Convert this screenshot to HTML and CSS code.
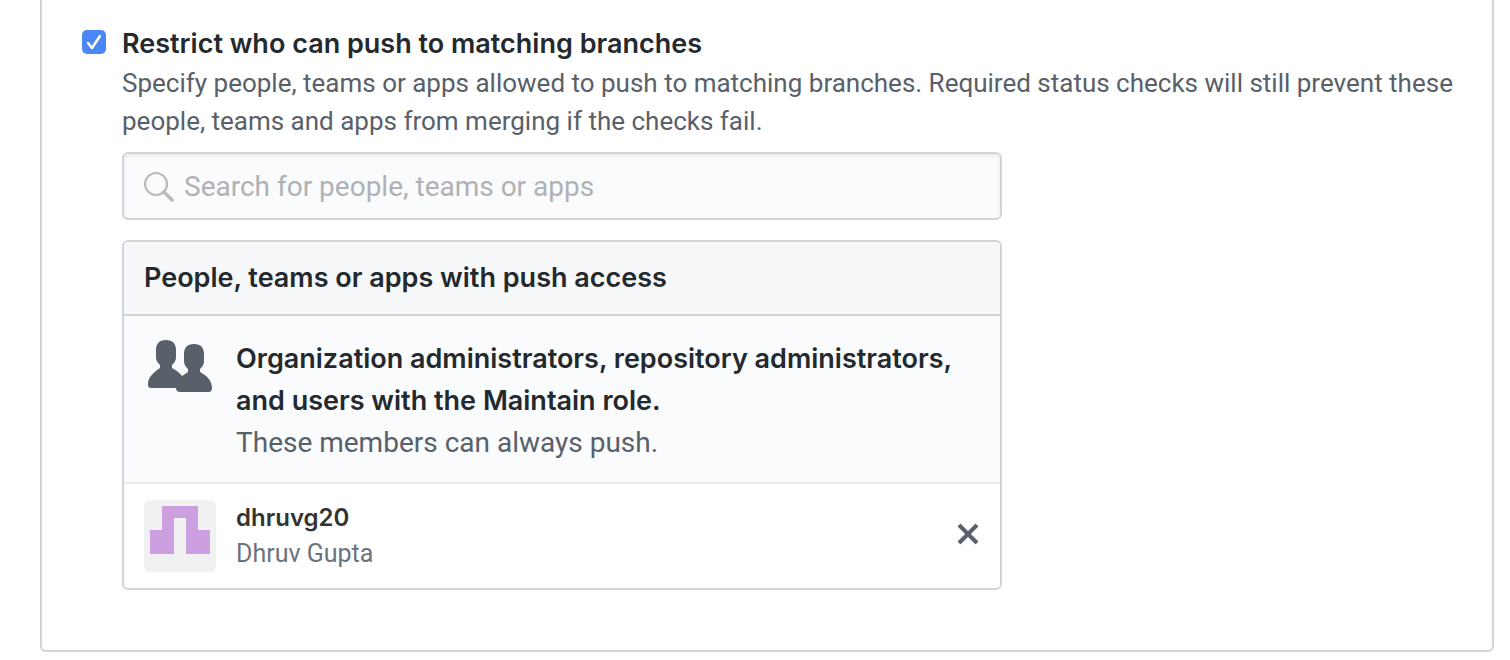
FILE: index.html
```html
<!DOCTYPE html>
<html lang="en">
<head>
<meta charset="utf-8">
<title>Branch protection rule</title>
<link rel="stylesheet" href="styles.css">
</head>
<body>
<main class="panel">
  <input class="check" type="checkbox" id="restrict" aria-describedby="restrict-note" checked>
  <div class="setting">
    <label class="setting-title" for="restrict">Restrict who can push to matching branches</label>
    <p class="note" id="restrict-note">Specify people, teams or apps allowed to push to matching branches. Required status checks will still prevent these people, teams and apps from merging if the checks fail.</p>
    <div class="search">
      <svg class="search-icon" viewBox="0 0 32 32" aria-hidden="true"><circle cx="12" cy="14" r="11" fill="none" stroke="currentColor" stroke-width="2.200"/><path d="M20 22l8 8" stroke="currentColor" stroke-width="3.600" stroke-linecap="round"/></svg>
      <input class="search-input" type="text" placeholder="Search for people, teams or apps" aria-label="Search for people, teams or apps">
    </div>
    <section class="access">
      <h2 class="access-title">People, teams or apps with push access</h2>
      <ul class="access-list">
        <li class="row row-admins">
          <svg class="people" viewBox="0 0 72 56" aria-hidden="true"><path fill="currentColor" d="M22 2C15 2 12 6 12 12v7c0 4 2 6 4 8v3C10 34 4 39 4 46c0 3 1 4 4 4h24c0 3 2 4 4 4h29c2 0 3-2 3-4 0-8-6-13-12-16v-3c2-2 4-4 4-8v-7c0-6-3-10-10-10s-10 4-10 10v7c0 4 2 6 4 8v3c-2 1-4 3-6 4-2-3-6-6-10-8v-3c2-2 4-4 4-8v-7C32 6 29 2 22 2z"/></svg>
          <div class="row-text">
            <strong class="admins">Organization administrators, repository administrators, and users with the Maintain role.</strong>
            <span class="admins-note">These members can always push.</span>
          </div>
        </li>
        <li class="row row-user">
          <svg class="avatar" viewBox="0 0 72 72" aria-hidden="true"><path fill="#f0f0f0" d="M0 0h72v72H0z"/><path fill="#cc9fe0" d="M18 6h36v24h12v24H42V18H30v36H6V30h12z"/></svg>
          <div class="row-text">
            <strong class="login">dhruvg20</strong>
            <span class="name">Dhruv Gupta</span>
          </div>
          <button class="remove" type="button" aria-label="Remove dhruvg20"><svg class="remove-icon" viewBox="0 0 24 24" aria-hidden="true"><path d="M3 3l18 18M21 3L3 21" stroke="currentColor" stroke-width="4"/></svg></button>
        </li>
      </ul>
    </section>
  </div>
</main>
</body>
</html>
```
FILE: styles.css
```css
* { box-sizing: border-box; }
body {
  margin: 0;
  background: #fff;
  color: #24292e;
  font-family: Roboto, "Liberation Sans", sans-serif;
  font-size: 28px;
}
.setting-title,
.access-title,
.admins,
.login {
  font-family: Inter, "Liberation Sans", sans-serif;
  font-size: 27px;
  font-weight: 600;
}
.panel {
  display: flex;
  align-items: flex-start;
  gap: 16px;
  margin: 0 16px 8px 40px;
  padding: 24px 32px 60px 40px;
  border: 2px solid #d1d5da;
  border-top: 0;
  border-radius: 0 0 6px 6px;
}
.check {
  appearance: none;
  flex: none;
  width: 24px;
  height: 24px;
  margin: 6px 0 0;
  border-radius: 5px;
  background: #4b87f6 url("data:image/svg+xml,%3Csvg xmlns='http://www.w3.org/2000/svg' viewBox='0 0 24 24'%3E%3Cpath d='M6 13l4 5 8-12' fill='none' stroke='white' stroke-width='2.500' stroke-linecap='round' stroke-linejoin='round'/%3E%3C/svg%3E");
}
.setting { flex: 1; min-width: 0; }
.setting-title {
  display: block;
  line-height: 40px;
}
.note {
  margin: 0 0 12px;
  color: #586069;
  font-size: 26px;
  line-height: 38px;
}
.search {
  display: flex;
  align-items: center;
  gap: 8px;
  max-width: 880px;
  height: 68px;
  padding: 0 20px;
  border: 2px solid #d1d5da;
  border-radius: 6px;
  background: #fafbfc;
  box-shadow: inset 0 2px 4px rgba(27, 31, 35, 0.08);
}
.search-icon { flex: none; width: 32px; height: 32px; color: #bbb; }
.search-input {
  flex: 1;
  min-width: 0;
  padding: 0;
  border: 0;
  outline: 0;
  background: transparent;
  color: inherit;
  font: inherit;
}
.search-input::placeholder { color: #afb1b6; opacity: 1; }
.access {
  max-width: 880px;
  margin-top: 20px;
  border: 2px solid #d1d5da;
  border-radius: 6px;
  overflow: hidden;
}
.access-title {
  margin: 0;
  padding: 16px 20px;
  border-bottom: 2px solid #d1d5da;
  background: #f6f8fa;
  line-height: 40px;
}
.access-list { margin: 0; padding: 0; list-style: none; }
.row { display: flex; gap: 20px; padding: 16px 20px; }
.row-text { flex: 1; min-width: 0; }
.row-admins {
  padding: 22px 20px 18px;
  border-bottom: 2px solid #e6e8eb;
  background: #fafbfc;
  line-height: 42px;
}
.people { flex: none; width: 72px; height: 56px; color: #586069; }
.admins { display: block; }
.admins-note { display: block; color: #586069; }
.row-user { align-items: center; }
.avatar { flex: none; width: 72px; height: 72px; border-radius: 6px; }
.login, .name { display: block; line-height: 36px; }
.login { color: #333; font-size: 24px; }
.name { color: #6a737d; font-size: 25px; }
.remove {
  flex: none;
  padding: 0 0 4px;
  border: 0;
  background: transparent;
  color: #586069;
  cursor: pointer;
}
.remove-icon { display: block; width: 24px; height: 24px; }
```
